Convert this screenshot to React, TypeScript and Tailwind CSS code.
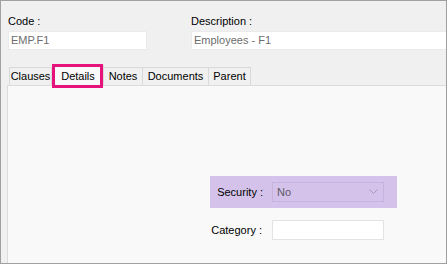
import React from "react";

const tabs = [
  { label: "Clauses", w: "w-[43px]" },
  { label: "Details", w: "w-[52px]", active: true },
  { label: "Notes", w: "w-[39px]" },
  { label: "Documents", w: "w-[66px]" },
  { label: "Parent", w: "w-[42px]" },
];

const App = () => {
  return (
    <div
      className="w-[447px] h-[264px] box-border border border-[#a0a0a0] bg-[#f0f0f0] flex flex-col text-[11px] text-black overflow-hidden"
      style={{ fontFamily: '"Liberation Sans", Arial, sans-serif' }}
    >
      {/* HEADER FIELDS */}
      <div className="flex gap-[44px] pl-[7px] pt-[14px]">
        <div className="flex flex-col w-[139px]">
          <label className="h-[13px] leading-[13px] mb-[3px]">Code :</label>
          <div className="h-[19px] bg-white border border-[#ebebeb] flex items-center pl-[2px] text-[#6d6d6d]">
            EMP.F1
          </div>
        </div>
        <div className="flex flex-col flex-1">
          <label className="h-[13px] leading-[13px] mb-[3px]">Description :</label>
          <div className="h-[19px] bg-white border border-r-0 border-[#ebebeb] flex items-center pl-[2px] text-[#6d6d6d]">
            Employees - F1
          </div>
        </div>
      </div>

      {/* TABS */}
      <div className="flex items-end h-[20px] mt-[15px] pl-[8px]">
        {tabs.map((t) =>
          t.active ? (
            <div
              key={t.label}
              className={`${t.w} relative z-10 h-[21px] -mb-px bg-[#f9f9f9] border border-b-0 border-[#d9d9d9] flex items-center justify-center`}
            >
              {t.label}
              <span className="absolute left-[-1px] right-0 top-[-2px] bottom-[-2px] border-[3px] border-[#e6137c]" />
            </div>
          ) : (
            <div
              key={t.label}
              className={`${t.w} h-[18px] bg-[#f0f0f0] border border-b-0 border-l-0 first:border-l border-[#d9d9d9] flex items-center justify-center`}
            >
              {t.label}
            </div>
          )
        )}
      </div>

      {/* PANEL */}
      <div className="flex-1 ml-[6px] bg-[#f9f9f9] border-t border-l border-[#dcdcdc] pl-[202px] pt-[90px]">
        <div className="w-[187px] h-[32px] bg-[#d4c2ea] flex items-center">
          <span className="w-[62px] text-right pr-[9px]">Security :</span>
          <div className="w-[112px] h-[20px] border border-[#c7b4de] bg-[#d4c2ea] flex items-center justify-between pl-[4px] pr-[5px] text-[#5f5866]">
            No
            <svg width="9" height="6" viewBox="0 0 9 6" fill="none">
              <path d="M0.5 0.5 L4.5 4.5 L8.5 0.5" stroke="#a89bb8" strokeWidth="1" />
            </svg>
          </div>
        </div>
        <div className="flex items-center mt-[12px]">
          <span className="w-[62px] text-right pr-[10px]">Category :</span>
          <div className="w-[112px] h-[20px] bg-white border border-[#e3e3e3]" />
        </div>
      </div>
    </div>
  );
};

export default App;
